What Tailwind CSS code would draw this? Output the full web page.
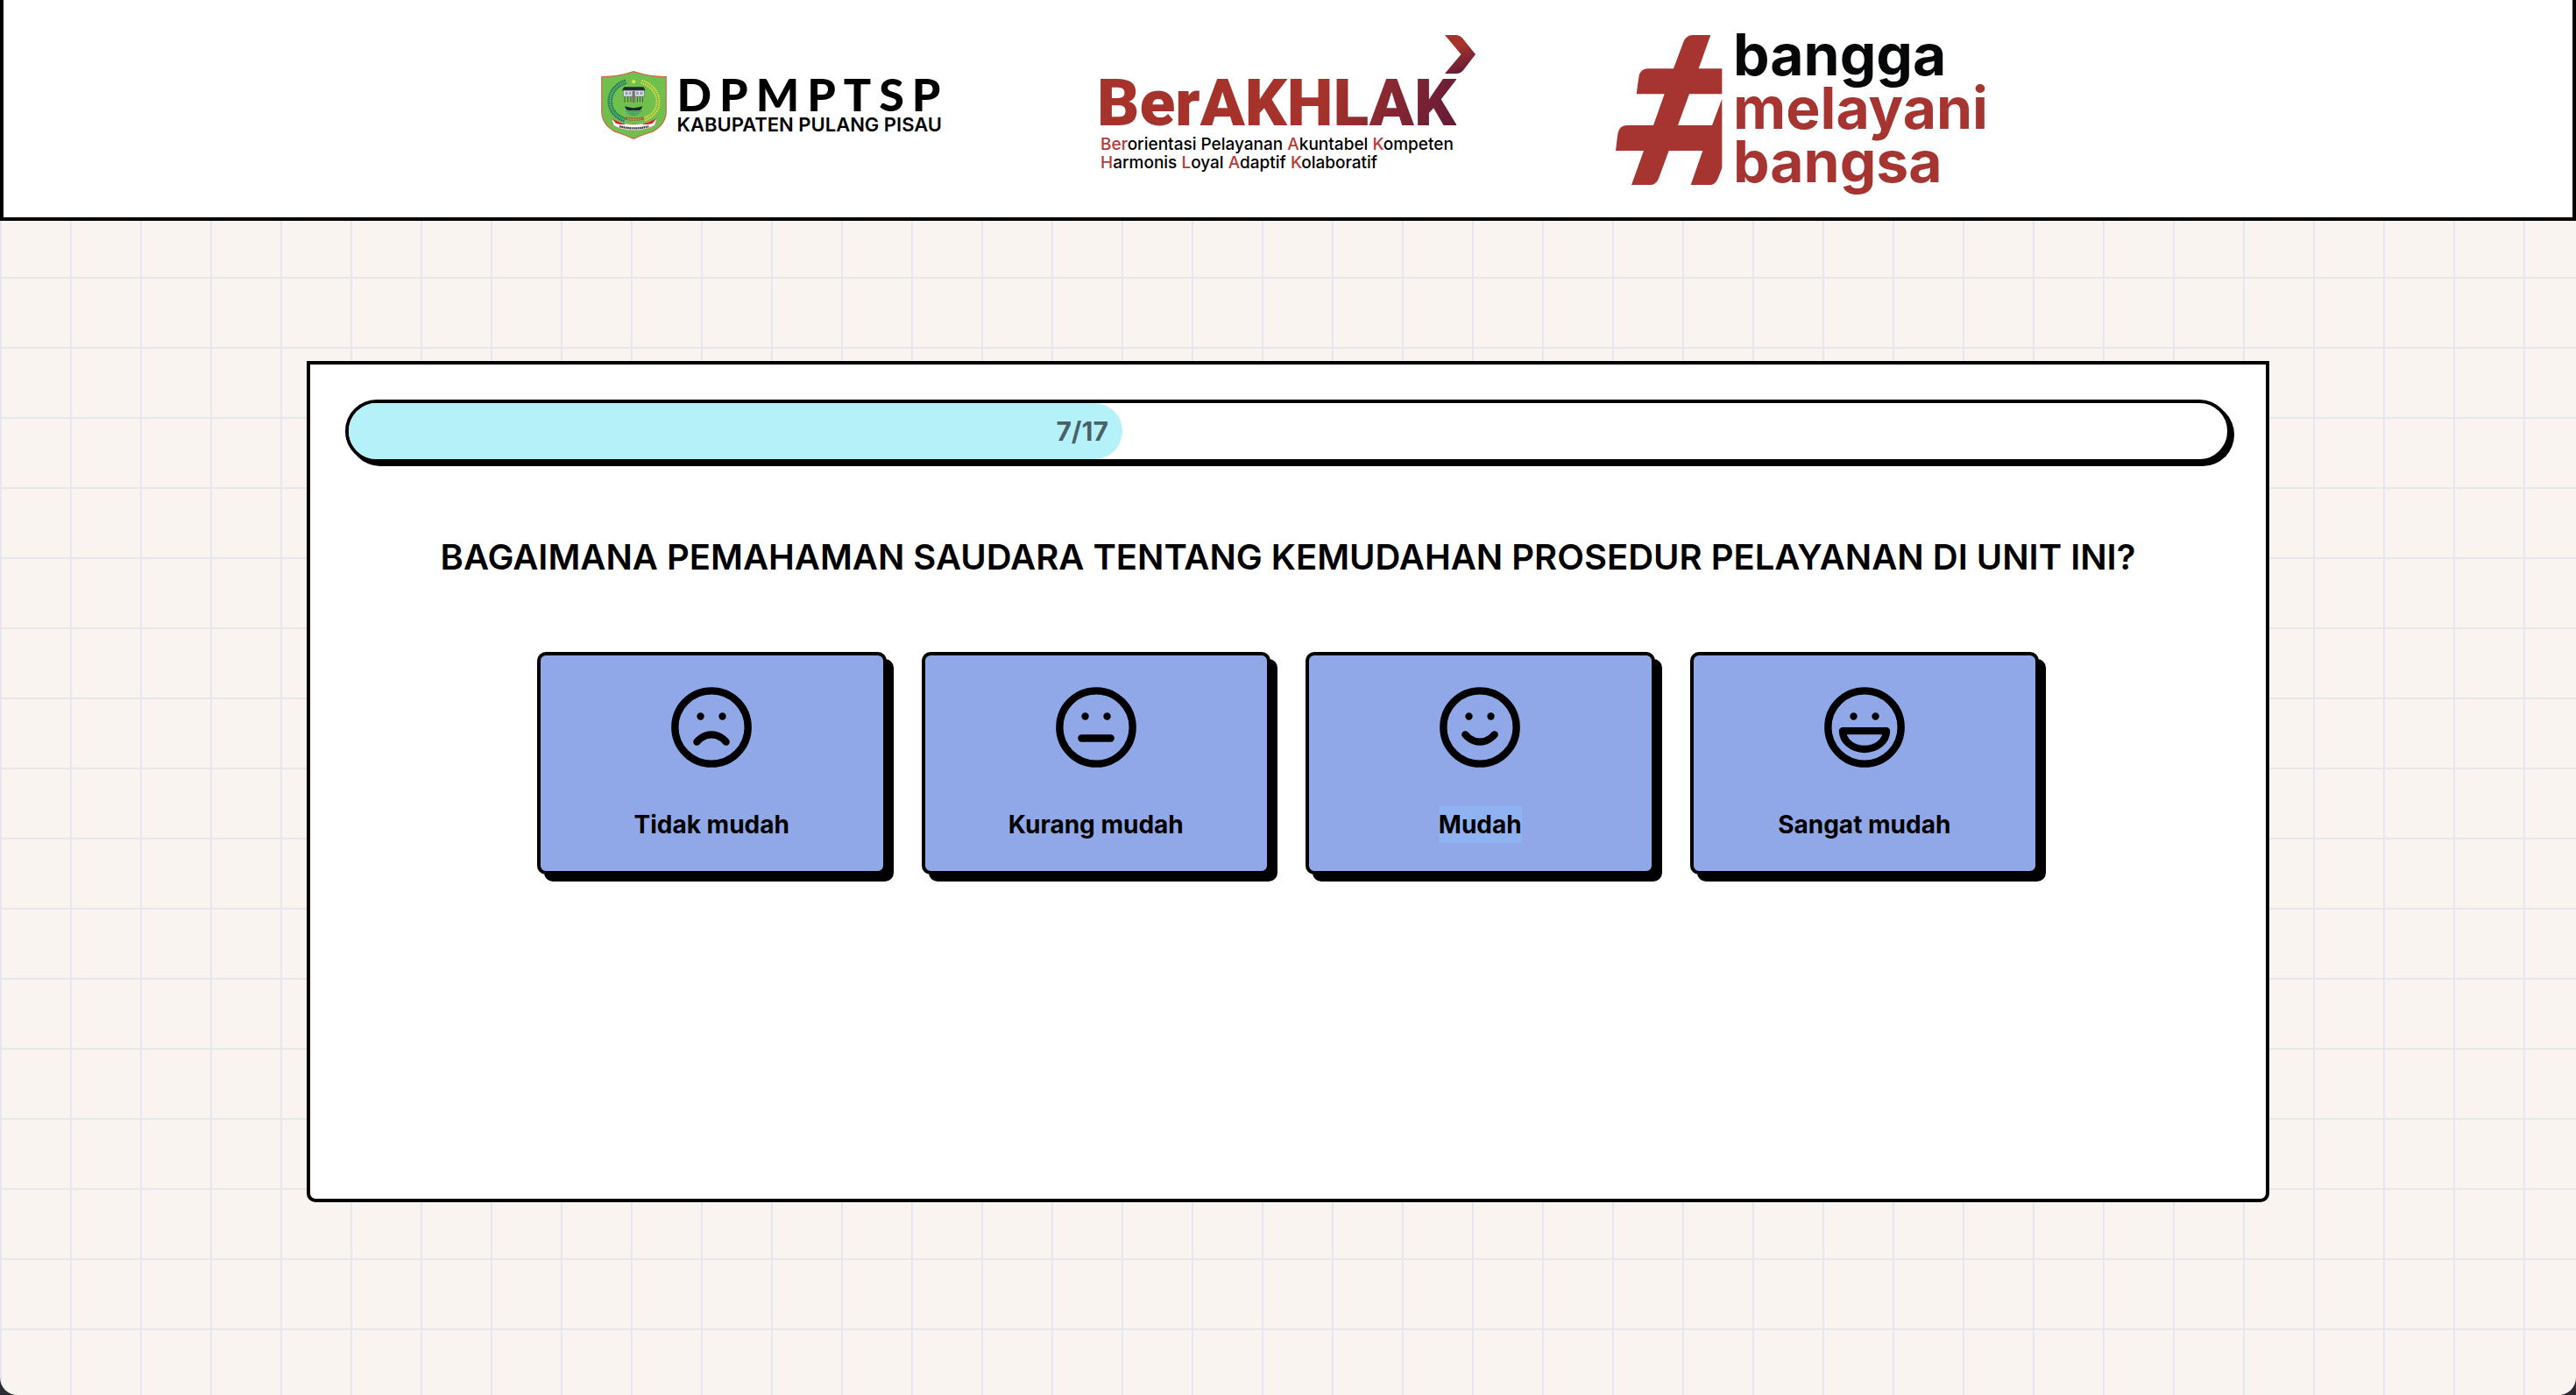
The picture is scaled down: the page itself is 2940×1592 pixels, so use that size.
<!DOCTYPE html>
<html lang="id">
<head>
<meta charset="utf-8">
<meta name="viewport" content="width=device-width, initial-scale=1">
<title>Survei Kepuasan Masyarakat - DPMPTSP Kabupaten Pulang Pisau</title>
<script src="https://cdn.jsdelivr.net/npm/@tailwindcss/browser@4"></script>
</head>
<body class="bg-[#2b2b30] font-['Inter',sans-serif] text-black">
<div class="min-h-screen rounded-b-[20px] bg-[#f9f4ef] bg-[linear-gradient(to_right,#e5e7eb_2px,transparent_2px),linear-gradient(to_bottom,#e5e7eb_2px,transparent_2px)] bg-[size:80px_80px] bg-[position:0_-4px]">

  <header class="flex items-start justify-center gap-40 border-x-4 border-b-4 border-black bg-white pt-10 pb-[33px]">
    <!-- DPMPTSP -->
    <div class="flex h-40 w-[428px] items-center justify-center gap-3 pl-1">
      <svg class="h-[78px] w-[75px] shrink-0" viewBox="27 17 226 236" role="img" aria-label="Lambang Kabupaten Pulang Pisau">
        <path d="M139 19Q196 38 251 37V160Q249 202 205 226Q165 238 139 251Q112 238 74 226Q31 202 29 160V37Q84 38 139 19Z" fill="#6fc04c" stroke="#cf6b4a" stroke-width="4"/>
        <path d="M112 54C70 68 55 100 58 130C61 158 82 176 108 186" fill="none" stroke="#1f7a5c" stroke-width="17" stroke-dasharray="5 2"/>
        <path d="M112 54C70 68 55 100 58 130C61 158 82 176 108 186" fill="none" stroke="#7fc8a0" stroke-width="2"/>
        <path d="M166 54C208 68 226 100 223 130C220 158 200 174 176 184" fill="none" stroke="#e6e04a" stroke-width="15" stroke-dasharray="4 3"/>
        <path d="M166 54C208 68 226 100 223 130C220 158 200 174 176 184" fill="none" stroke="#6d9c2c" stroke-width="2"/>
        <path d="M139 45l3 6h6l-5 4 2 7-6-4-6 4 2-7-5-4h6z" fill="#f4e93d"/>
        <path d="M106 72H173L180 84H99Z" fill="#1d2a2c"/>
        <path d="M103 84H176V105H103Z" fill="#dfe3ea" stroke="#5b6470" stroke-width="2"/>
        <path d="M110 89h9v10h-9zM123 89h7v10h-7zM148 89h8v10h-8zM161 89h9v10h-9z" fill="#8c9bb0"/>
        <path d="M134 86h10v40h-10z" fill="#7d6f74"/>
        <path d="M108 106v20M119 106v18M129 106v18M152 106v18M161 106v18M170 106v20" stroke="#4c5a48" stroke-width="3"/>
        <path d="M109 139Q139 150 169 139Q167 153 158 153H121Q111 153 109 139Z" fill="#17292e"/>
        <path d="M112 157H168M118 163H160M126 169H152" stroke="#2f86a0" stroke-width="3"/>
        <path d="M112 175Q140 183 172 175L176 185Q140 193 108 185Z" fill="#9a6b3c"/>
        <path d="M118 182Q140 187 166 182" fill="none" stroke="#e3c07a" stroke-width="3" stroke-dasharray="5 4"/>
        <path d="M62 180Q100 202 139 202Q180 202 220 180L212 205Q176 222 139 222Q100 222 70 205Z" fill="#fff" stroke="#a33" stroke-width="1"/>
        <path d="M62 180Q90 197 112 200Q96 204 78 198ZM220 180Q190 197 168 200Q186 204 204 198Z" fill="#d3202a"/>
        <path d="M90 208Q139 222 190 208" fill="none" stroke="#2a2a2a" stroke-width="7" stroke-dasharray="5 2"/>
      </svg>
      <div class="whitespace-nowrap">
        <p class="font-['Lato',sans-serif] text-[52px] leading-10 font-black tracking-[9px]">DPMPTSP</p>
        <p class="mt-1 text-[22px] leading-[22px] font-semibold">KABUPATEN PULANG PISAU</p>
      </div>
    </div>

    <!-- BerAKHLAK -->
    <div class="flex w-[428px] flex-col whitespace-nowrap">
      <svg class="h-11 w-[35px] self-end" viewBox="1226 60 106 132" preserveAspectRatio="none" aria-hidden="true">
        <defs><linearGradient id="arrow" x1="0.3" y1="0" x2="0.6" y2="1"><stop offset="0.3" stop-color="#a5332b"/><stop offset="0.95" stop-color="#651a38"/></linearGradient></defs>
        <path d="M1226 60H1264Q1278 60 1288 72L1332 126L1290 180Q1280 192 1266 192H1226L1282 126Z" fill="url(#arrow)"/>
      </svg>
      <p class="mt-1.5 -ml-1 self-start bg-[linear-gradient(110deg,#a5332b_62%,#651a38_100%)] bg-clip-text font-['Roboto',sans-serif] text-[75px] leading-[54px] font-black text-transparent">BerAKHLAK</p>
      <p class="mt-2.5 text-[19px] leading-[21px] font-medium"><span class="text-[#b83a35]">Ber</span>orientasi Pelayanan <span class="text-[#b83a35]">A</span>kuntabel <span class="text-[#b83a35]">K</span>ompeten<br><span class="text-[#b83a35]">H</span>armonis <span class="text-[#b83a35]">L</span>oyal <span class="text-[#b83a35]">A</span>daptif <span class="text-[#b83a35]">K</span>olaboratif</p>
    </div>

    <!-- Bangga melayani bangsa -->
    <div class="flex w-[428px] items-start gap-3 whitespace-nowrap text-[#a63531]">
      <svg class="h-[171px] w-[122px] shrink-0" viewBox="72 60 366 513" role="img" aria-label="#">
        <path fill="currentColor" d="M397 60L356 175H436V262H324L285 369H402L436 278V515L422 551Q413 573 394 573H329L370 456H254L219 551Q210 573 190 573H126L168 456H72L79 398Q83 369 112 369H201L239 262H143L151 204Q155 175 184 175H270L303 86Q312 60 336 60Z"/>
      </svg>
      <p class="-mt-2 text-[66px] leading-[61px] font-bold"><span class="text-[#060709]">bangga</span><br>melayani<br>bangsa</p>
    </div>
  </header>

  <main class="px-10 pt-40 pb-40">
    <section class="mx-auto min-h-[960px] max-w-[2240px] rounded-b-[10px] border-4 border-black bg-white p-10">
      <div role="progressbar" aria-label="Kemajuan survei" aria-valuemin="0" aria-valuemax="17" aria-valuenow="7" class="h-[72px] rounded-full border-4 border-black bg-white shadow-[4px_4px_0_0_#000]">
        <div class="flex h-full items-center justify-end rounded-full bg-[#b5f1f9] pr-4" style="width:41.18%">
          <span class="text-[30px] leading-10 font-bold text-black/60">7/17</span>
        </div>
      </div>

      <h1 class="my-20 text-center text-[40px] leading-[56px] font-semibold">BAGAIMANA PEMAHAMAN SAUDARA TENTANG KEMUDAHAN PROSEDUR PELAYANAN DI UNIT INI?</h1>

      <div class="mx-auto grid max-w-[1714px] grid-cols-4 gap-10">
        <button type="button" class="flex flex-col items-center gap-10 rounded-[10px] border-4 border-black bg-[#90a8e8] py-8 shadow-[8px_8px_0_0_#000]">
          <svg class="size-[100px]" viewBox="0 0 24 24" fill="none" stroke="currentColor" stroke-width="2" stroke-linecap="round" stroke-linejoin="round" aria-hidden="true"><circle cx="12" cy="12" r="10"/><path d="M16 16s-1.5-2-4-2-4 2-4 2M9 9h.01M15 9h.01"/></svg>
          <span class="text-[28px] leading-[42px] font-bold">Tidak mudah</span>
        </button>
        <button type="button" class="flex flex-col items-center gap-10 rounded-[10px] border-4 border-black bg-[#90a8e8] py-8 shadow-[8px_8px_0_0_#000]">
          <svg class="size-[100px]" viewBox="0 0 24 24" fill="none" stroke="currentColor" stroke-width="2" stroke-linecap="round" stroke-linejoin="round" aria-hidden="true"><circle cx="12" cy="12" r="10"/><path d="M8 15h8M9 9h.01M15 9h.01"/></svg>
          <span class="text-[28px] leading-[42px] font-bold">Kurang mudah</span>
        </button>
        <button type="button" class="flex flex-col items-center gap-10 rounded-[10px] border-4 border-black bg-[#90a8e8] py-8 shadow-[8px_8px_0_0_#000]">
          <svg class="size-[100px]" viewBox="0 0 24 24" fill="none" stroke="currentColor" stroke-width="2" stroke-linecap="round" stroke-linejoin="round" aria-hidden="true"><circle cx="12" cy="12" r="10"/><path d="M8 14s1.5 2 4 2 4-2 4-2M9 9h.01M15 9h.01"/></svg>
          <span class="bg-[#8fb3f2] text-[28px] leading-[42px] font-bold">Mudah</span>
        </button>
        <button type="button" class="flex flex-col items-center gap-10 rounded-[10px] border-4 border-black bg-[#90a8e8] py-8 shadow-[8px_8px_0_0_#000]">
          <svg class="size-[100px]" viewBox="0 0 24 24" fill="none" stroke="currentColor" stroke-width="2" stroke-linecap="round" stroke-linejoin="round" aria-hidden="true"><circle cx="12" cy="12" r="10"/><path d="M18 13a6 5 0 0 1-6 5 6 5 0 0 1-6-5ZM9 9h.01M15 9h.01"/></svg>
          <span class="text-[28px] leading-[42px] font-bold">Sangat mudah</span>
        </button>
      </div>
    </section>
  </main>
</div>
</body>
</html>
